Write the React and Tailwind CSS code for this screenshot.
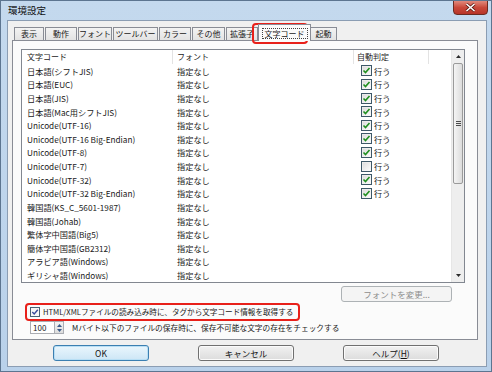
import React from "react";

const rows = [
  ["日本語(シフトJIS)", true],
  ["日本語(EUC)", true],
  ["日本語(JIS)", true],
  ["日本語(Mac用シフトJIS)", true],
  ["Unicode(UTF-16)", true],
  ["Unicode(UTF-16 Big-Endian)", true],
  ["Unicode(UTF-8)", true],
  ["Unicode(UTF-7)", false],
  ["Unicode(UTF-32)", true],
  ["Unicode(UTF-32 Big-Endian)", true],
  ["韓国語(KS_C_5601-1987)", null],
  ["韓国語(Johab)", null],
  ["繁体字中国語(Big5)", null],
  ["簡体字中国語(GB2312)", null],
  ["アラビア語(Windows)", null],
  ["ギリシャ語(Windows)", null],
];

const tabs = [
  ["表示", "w-[30px]"],
  ["動作", "w-[32px]"],
  ["フォント", "w-[34px]"],
  ["ツールバー", "w-[45px]"],
  ["カラー", "w-[32px]"],
  ["その他", "w-[33px]"],
  ["拡張子", "w-[32px]"],
];

function Check({ checked }) {
  return (
    <svg width="11" height="11" viewBox="0 0 11 11" className="shrink-0">
      <defs>
        <linearGradient id="cbg" x1="0" y1="0" x2="1" y2="1">
          <stop offset="0" stopColor="#dcdcdc" />
          <stop offset="1" stopColor="#fbfbfb" />
        </linearGradient>
      </defs>
      <rect x="0.5" y="0.5" width="10" height="10" fill="#f4f4f4" stroke="#3d5868" />
      <rect x="1.5" y="1.5" width="8" height="8" fill="url(#cbg)" />
      {checked && (
        <path d="M2.5 5.5 L4.5 7.5 L8.5 3" fill="none" stroke="#1f8f1f" strokeWidth="1.6" />
      )}
    </svg>
  );
}

function SmallCheck() {
  return (
    <svg width="10" height="10" viewBox="0 0 10 10" className="shrink-0">
      <rect x="0.5" y="0.5" width="9" height="9" fill="#f6f6f6" stroke="#4a6274" />
      <path d="M2.3 5 L4.2 7 L7.8 2.8" fill="none" stroke="#3a4a9a" strokeWidth="1.4" />
    </svg>
  );
}

function Button({ children, def, disabled, w }) {
  return (
    <div
      className={
        "h-[16px] flex items-center justify-center rounded-[3px] text-[8.5px] whitespace-nowrap " +
        w +
        " " +
        (def
          ? "border border-[#3c7fb1] bg-gradient-to-b from-[#eaf6fd] to-[#cde6f6] shadow-[inset_0_0_0_1px_#b8dff5] text-[#111]"
          : disabled
          ? "border border-[#adb2b5] bg-[#f4f4f4] text-[#8d8d8d]"
          : "border border-[#707070] bg-gradient-to-b from-[#f2f2f2] to-[#dcdcdc] shadow-[inset_0_0_0_1px_#fbfbfb] text-[#111]")
      }
    >
      {children}
    </div>
  );
}

export default function App() {
  return (
    <div className="w-[492px] h-[372px] flex flex-col bg-gradient-to-b from-[#c4d9ee] to-[#b9d1ea] border border-[#5d7590] overflow-hidden text-[#1a1a1a] font-['Noto_Sans_CJK_JP','Noto_Sans',sans-serif] leading-none">
      {/* title bar */}
      <div className="h-[19px] shrink-0 flex items-start justify-between pl-[7px] pr-[3px]">
        <div className="pt-[5px] text-[9.5px] text-[#101010]">環境設定</div>
        <div className="w-[35px] h-[15px] -mt-px rounded-b-[4px] border border-[#6a2b22] bg-gradient-to-b from-[#e0897c] via-[#c9483a] to-[#b73428] flex items-center justify-center">
          <svg width="11" height="9" viewBox="0 0 11 9">
            <path d="M1.5 1 L9.5 8 M9.5 1 L1.5 8" stroke="#5a1c14" strokeWidth="3" />
            <path d="M1.5 1 L9.5 8 M9.5 1 L1.5 8" stroke="#ffffff" strokeWidth="1.6" />
          </svg>
        </div>
      </div>

      {/* body */}
      <div className="flex-1 ml-[6px] mr-[4px] mb-[4px] border border-[#8b9db3] bg-[#f0f0f0] flex flex-col">
        {/* tab strip */}
        <div className="h-[19px] shrink-0 flex items-end pl-[6px]">
          {tabs.map(([t, w]) => (
            <div
              key={t}
              className={
                w +
                " h-[13px] mr-px border border-b-0 border-[#898c95] bg-gradient-to-b from-[#f3f3f3] to-[#e3e3e3] flex items-center justify-center text-[8px] whitespace-nowrap"
              }
            >
              {t}
            </div>
          ))}
          <div className="relative z-10 -mb-px w-[53px] h-[17px] -ml-px border border-b-0 border-[#898c95] bg-[#fbfbfb] flex items-start justify-center pt-[3px]">
            <div className="border border-dotted border-[#444] px-[2px] h-[11px] flex items-center text-[8px] whitespace-nowrap">
              文字コード
            </div>
          </div>
          <div className="w-[27px] h-[13px] -ml-px border border-b-0 border-[#898c95] bg-gradient-to-b from-[#f3f3f3] to-[#e3e3e3] flex items-center justify-center text-[8px]">
            起動
          </div>
        </div>

        {/* panel */}
        <div className="relative ml-[4px] mr-[8px] h-[300px] border border-[#898c95] bg-[#fbfbfb] flex flex-col">
          <div className="pointer-events-none absolute left-[239px] -top-[18px] w-[56px] h-[21px] rounded-[4px] border-2 border-[#e8201a]" />

          {/* list box */}
          <div className="ml-[8px] mt-[8px] w-[444px] h-[234px] border border-[#828790] bg-white flex">
            <div className="flex-1 flex flex-col">
              {/* header */}
              <div className="h-[14px] flex text-[8px] items-center">
                <div className="w-[151px] h-full flex items-center pl-[5px] border-r border-[#e3e3e3]">文字コード</div>
                <div className="w-[181px] h-full flex items-center pl-[4px] border-r border-[#e3e3e3]">フォント</div>
                <div className="w-[75px] h-full flex items-center pl-[3px] border-r border-[#e3e3e3]">自動判定</div>
                <div className="flex-1" />
              </div>
              {rows.map(([name, c]) => (
                <div key={name} className="h-[13.65px] flex items-center text-[8.2px]">
                  <div className="w-[151px] pl-[5px] whitespace-nowrap">{name}</div>
                  <div className="w-[181px] pl-[4px]">指定なし</div>
                  <div className="w-[75px] pl-[7px] flex items-center gap-[2px]">
                    {c !== null && (
                      <>
                        <Check checked={c} />
                        <span>行う</span>
                      </>
                    )}
                  </div>
                </div>
              ))}
            </div>
            {/* scrollbar */}
            <div className="w-[13px] bg-[#eeeeee] border-l border-[#e6e6e6] flex flex-col">
              <div className="h-[13px] flex items-center justify-center">
                <svg width="5" height="3" viewBox="0 0 5 3">
                  <path d="M0 3 L2.5 0 L5 3 Z" fill="#2a2a2a" />
                </svg>
              </div>
              <div className="mx-px h-[121px] rounded-[2px] border border-[#9a9a9a] bg-gradient-to-r from-[#f4f4f4] to-[#dcdcdc] flex flex-col items-center justify-center gap-px">
                <div className="w-[5px] h-px bg-[#4a4a4a]" />
                <div className="w-[5px] h-px bg-[#4a4a4a]" />
                <div className="w-[5px] h-px bg-[#4a4a4a]" />
              </div>
              <div className="flex-1" />
              <div className="h-[13px] flex items-center justify-center">
                <svg width="5" height="3" viewBox="0 0 5 3">
                  <path d="M0 0 L2.5 3 L5 0 Z" fill="#2a2a2a" />
                </svg>
              </div>
            </div>
          </div>

          {/* change font button */}
          <div className="flex justify-end mr-[25px] mt-[3px]">
            <Button disabled w="w-[111px]">フォントを変更...</Button>
          </div>

          {/* html checkbox */}
          <div className="ml-[12px] mt-[1px] w-[275px] h-[18px] rounded-[4px] border-2 border-[#e8201a] flex items-center pl-[3px] gap-[3px] text-[7.6px]">
            <SmallCheck />
            <span className="whitespace-nowrap">HTML/XMLファイルの読み込み時に、タグから文字コード情報を取得する</span>
          </div>

          {/* spin row */}
          <div className="ml-[17px] h-[13px] flex items-center text-[7.7px]">
            <div className="w-[25px] h-[13px] border border-[#abadb3] bg-white flex items-center pl-[2px] text-[8px]">100</div>
            <div className="w-[9px] h-[13px] border border-[#abadb3] border-l-0 bg-gradient-to-b from-[#f3f3f3] to-[#dedede] flex flex-col items-center justify-center gap-[2px]">
              <svg width="5" height="3" viewBox="0 0 5 3"><path d="M0 3 L2.5 0 L5 3 Z" fill="#3a5a8a" /></svg>
              <svg width="5" height="3" viewBox="0 0 5 3"><path d="M0 0 L2.5 3 L5 0 Z" fill="#3a5a8a" /></svg>
            </div>
            <span className="ml-[8px] whitespace-nowrap">Mバイト以下のファイルの保存時に、保存不可能な文字の存在をチェックする</span>
          </div>
        </div>

        {/* dialog buttons */}
        <div className="flex-1 flex items-center pl-[45px] gap-[49px]">
          <Button def w="w-[96px]">OK</Button>
          <Button w="w-[96px]">キャンセル</Button>
          <Button w="w-[96px]">ヘルプ(<span className="underline">H</span>)</Button>
        </div>
      </div>
    </div>
  );
}
